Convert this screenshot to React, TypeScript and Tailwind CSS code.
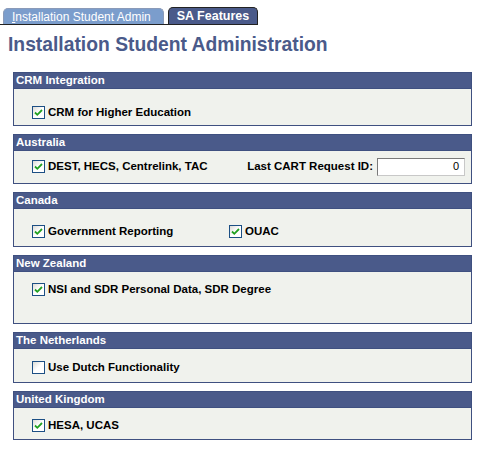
import React from "react";

const font = { fontFamily: '"Liberation Sans", Arial, sans-serif' };

function Check({ checked }: { checked: boolean }) {
  return (
    <span className="inline-flex h-[13px] w-[13px] shrink-0 items-center justify-center border border-[#1c4f84] bg-gradient-to-br from-[#dcdcd6] via-white to-white">
      {checked && (
        <svg width="9" height="9" viewBox="0 0 9 9">
          <path d="M1 4.5 L3.3 6.8 L8 2" fill="none" stroke="#21a121" strokeWidth="1.8" />
        </svg>
      )}
    </span>
  );
}

function Item({ label, checked = true }: { label: string; checked?: boolean }) {
  return (
    <div className="flex items-center gap-[3px]">
      <Check checked={checked} />
      <span className="text-[11.5px] font-bold leading-[13px] text-black">{label}</span>
    </div>
  );
}

function Box({
  title,
  bodyClass,
  children,
}: {
  title: string;
  bodyClass: string;
  children: React.ReactNode;
}) {
  return (
    <div className="ml-[13px] w-[459px] border border-[#3f5080]">
      <div className="h-[16px] border-b border-[#3f5080] bg-[#4a5a8a] pl-[2px] text-[11.5px] font-bold leading-[15px] text-white">
        {title}
      </div>
      <div className={`bg-[#f0f2ed] pl-[18px] ${bodyClass}`}>{children}</div>
    </div>
  );
}

export default function App() {
  return (
    <div className="h-[449px] w-[480px] bg-white" style={font}>
      {/* Tabs */}
      <div className="flex h-[25px] w-[258px] items-end border-b border-[#222] pl-[3px] pt-[8px]">
        <div className="flex h-[16px] w-[161px] items-center rounded-t-[5px] border border-b-0 border-[#8a9ab8] bg-[#7b9dcc] pl-[8px] text-[12px] leading-[14px] text-white">
          <span className="underline decoration-1 underline-offset-1">I</span>nstallation Student Admin
        </div>
        <div className="ml-[4px] flex h-[17px] w-[90px] items-center justify-center rounded-t-[5px] border border-b-0 border-[#222] bg-[#4a5a8a] text-[12.5px] font-bold leading-[14px] text-white">
          SA Features
        </div>
      </div>

      <h1 className="ml-[8px] mt-[9px] text-[19.3px] font-bold leading-[22px] text-[#4a5a8a]">
        Installation Student Administration
      </h1>

      <div className="mt-[16px] flex flex-col gap-[8px]">
        <Box title="CRM Integration" bodyClass="h-[36px] pt-[17px]">
          <Item label="CRM for Higher Education" />
        </Box>

        <Box title="Australia" bodyClass="flex h-[32px] items-center pb-[1px]">
          <Item label="DEST, HECS, Centrelink, TAC" />
          <div className="ml-auto mr-[6px] flex items-center gap-[4px]">
            <span className="text-[11.5px] font-bold text-black">Last CART Request ID:</span>
            <div className="flex h-[18px] w-[88px] items-center justify-end border border-[#7a7a7a] border-r-[#c8c8c8] border-b-[#c8c8c8] bg-white pr-[5px] text-[11px] text-black">
              0
            </div>
          </div>
        </Box>

        <Box title="Canada" bodyClass="flex h-[37px] items-start pt-[16px]">
          <div className="w-[197px]">
            <Item label="Government Reporting" />
          </div>
          <Item label="OUAC" />
        </Box>

        <Box title="New Zealand" bodyClass="h-[51px] pt-[11px]">
          <Item label="NSI and SDR Personal Data, SDR Degree" />
        </Box>

        <Box title="The Netherlands" bodyClass="h-[33px] pt-[12px]">
          <Item label="Use Dutch Functionality" checked={false} />
        </Box>

        <Box title="United Kingdom" bodyClass="h-[31px] pt-[11px]">
          <Item label="HESA, UCAS" />
        </Box>
      </div>
    </div>
  );
}
